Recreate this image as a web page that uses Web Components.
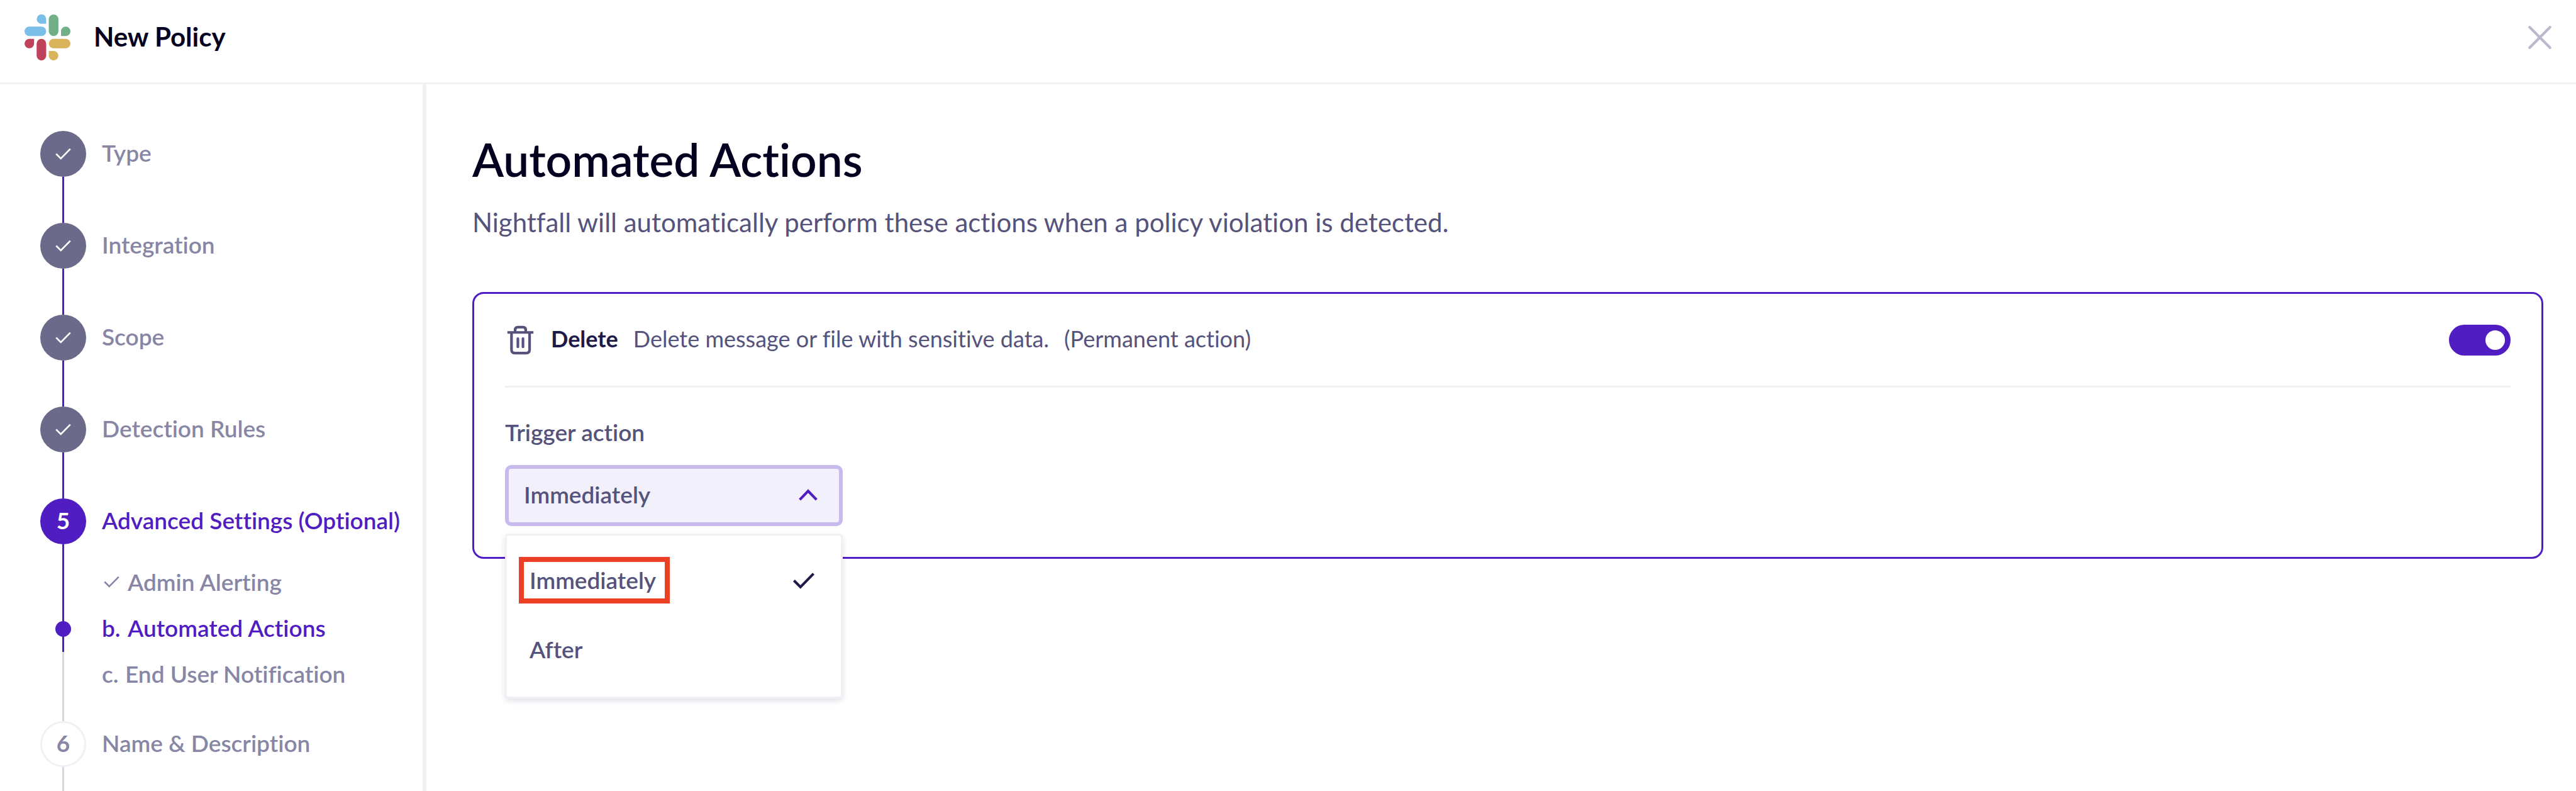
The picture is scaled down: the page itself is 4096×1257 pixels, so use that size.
<!DOCTYPE html>
<html lang="en">
<head>
<meta charset="utf-8">
<meta name="viewport" content="width=device-width, initial-scale=1">
<title>New Policy</title>
<style>
  :root {
    --ink: #03001f;
    --ink-strong: #1e1b4b;
    --ink-soft: #55537b;
    --ink-muted: #8886a5;
    --slate: #6b6a8a;
    --accent: #4f1dc2;
    --line: #f0f0f5;
    --rail: #d6d5e0;
  }
  body {
    margin: 0;
    background: #fff;
    color: var(--ink);
    font: 600 37px/44px Lato, "Liberation Sans", sans-serif;
    font-variant-ligatures: none;
  }
</style>
</head>
<body>
<policy-page>
  <page-header slot="header">New Policy</page-header>

  <step-nav slot="nav">
    <step-item state="done">Type</step-item>
    <step-item state="done">Integration</step-item>
    <step-item state="done">Scope</step-item>
    <step-item state="done">Detection Rules</step-item>
    <step-item state="current" number="5" open>Advanced Settings (Optional)</step-item>
    <sub-step state="done">Admin Alerting</sub-step>
    <sub-step state="current" marker="b.">Automated Actions</sub-step>
    <sub-step state="todo" marker="c." last>End User Notification</sub-step>
    <step-item state="todo" number="6">Name &amp; Description</step-item>
  </step-nav>

  <section-intro>
    <span slot="title">Automated Actions</span>
    Nightfall will automatically perform these actions when a policy violation is detected.
  </section-intro>

  <action-card name="Delete">
    <span slot="description">Delete message or file with sensitive data.</span>
    <span slot="note">(Permanent action)</span>
    <drop-down label="Trigger action" options="Immediately,After" value="Immediately"></drop-down>
  </action-card>
</policy-page>

<script>
const CHECK = '<path d="M3 14l10 10L33 3.5" fill="none" stroke="currentColor" stroke-width="var(--check-weight, 3.5)"/>';

class Base extends HTMLElement {
  connectedCallback() {
    if (this.shadowRoot) return;
    this.attachShadow({ mode: 'open' }).innerHTML = this.render();
  }
}

/* Page frame: header on top, step navigation beside the content. */
customElements.define('policy-page', class extends Base {
  render() {
    return `<style>
      :host { display: flex; flex-direction: column; min-height: 100vh; }
      .body { flex: 1; display: grid; grid-template-columns: auto 1fr; }
      main { padding: 75px 52px 73px 73px; min-width: 0; }
    </style>
    <slot name="header"></slot>
    <div class="body"><slot name="nav"></slot><main><slot></slot></main></div>`;
  }
});

customElements.define('page-header', class extends Base {
  render() {
    return `<style>
      :host { display: block; border-bottom: 3px solid var(--line); }
      header { display: flex; align-items: center; padding: 23px 39px 35px; }
      .logo { width: 73px; height: 73px; margin-right: 37px; }
      h1 { margin: 0; padding-bottom: 4px; flex: 1; font-size: 42px; line-height: 50px; font-weight: 700; }
      button { display: flex; padding: 0; border: 0; background: none; color: #bbb9cc; }
      button svg { width: 37px; height: 37px; }
    </style>
    <header>
      <svg class="logo" viewBox="0 0 96 96" aria-hidden="true">
        <g fill="#7bbfe8"><path d="M45.3 19.5H35.3A9.9 9.9 0 1 1 45.3 9.8Z"/><rect y="25.3" width="45.3" height="19.7" rx="9.8"/></g>
        <g fill="#71b087"><rect x="50.7" width="20.2" height="45" rx="10"/><path d="M76.3 45V35A9.85 9.85 0 1 1 86.2 45Z"/></g>
        <g fill="#bf425c"><path d="M20 51V61A10 9.9 0 1 1 10 51Z"/><rect x="25.3" y="51" width="20" height="45" rx="10"/></g>
        <g fill="#dab45c"><rect x="50.7" y="51" width="45.3" height="19.7" rx="9.8"/><path d="M50.7 76.3H60.8A10 9.85 0 1 1 50.7 86.2Z"/></g>
      </svg>
      <h1><slot></slot></h1>
      <button type="button" aria-label="Close">
        <svg viewBox="0 0 48 48" aria-hidden="true"><path d="M3 3l42 42M45 3L3 45" stroke="currentColor" stroke-width="5.5" stroke-linecap="round"/></svg>
      </button>
    </header>`;
  }
});

customElements.define('step-nav', class extends Base {
  render() {
    return `<style>
      :host { display: block; border-right: 6px solid var(--line); }
      nav { box-sizing: border-box; display: flex; flex-direction: column; height: 100%; padding: 74px 37px 0 64px; width: 672px; }
      ::slotted(:last-child) { flex: 1; }
    </style>
    <nav aria-label="Policy steps"><slot></slot></nav>`;
  }
});

customElements.define('step-item', class extends Base {
  render() {
    const number = this.getAttribute('number');
    const mark = number ? `<span class="num">${number}</span>` : `<svg viewBox="0 0 36 28" aria-hidden="true">${CHECK}</svg>`;
    return `<style>
      :host { display: grid; grid-template-columns: 73px 1fr; column-gap: 25px; color: var(--ink-muted); }
      .rail { display: flex; flex-direction: column; align-items: center; }
      .disc { box-sizing: border-box; flex: none; width: 73px; height: 73px; border-radius: 50%; display: flex; align-items: center; justify-content: center; background: var(--slate); color: #fff; }
      .disc svg { width: 27px; height: 21px; }
      .num { font-weight: 700; padding-bottom: 4px; }
      .line { flex: 1; width: 3px; min-height: 73px; background: var(--accent); }
      .label { height: 69px; line-height: 69px; white-space: nowrap; }
      :host([state=current]) { color: var(--accent); }
      :host([state=current]) .disc { background: var(--accent); }
      :host([state=todo]) .disc { background: #fff; border: 3px solid var(--line); color: var(--ink-muted); }
      :host([state=todo]) .line { background: var(--rail); min-height: 0; }
      :host([open]) .line { min-height: 25px; }
    </style>
    <div class="rail"><div class="disc">${mark}</div><div class="line"></div></div>
    <div class="label"><slot></slot></div>`;
  }
});

customElements.define('sub-step', class extends Base {
  render() {
    const marker = this.getAttribute('marker');
    const mark = marker || `<svg viewBox="0 0 36 28" aria-hidden="true">${CHECK}</svg>`;
    return `<style>
      :host { display: grid; grid-template-columns: 73px 1fr; column-gap: 25px; color: var(--ink-muted); }
      :host([last]) .rail { height: 110px; }
      .rail { display: flex; align-items: center; justify-content: center; height: 73px;
        background: linear-gradient(var(--accent), var(--accent)) center / 3px 100% no-repeat; }
      .label { display: flex; align-items: center; height: 69px; white-space: nowrap; }
      .mark { min-width: 41px; flex: none; }
      .mark svg { display: block; width: 27px; height: 21px; margin-left: 2px; }
      :host([state=current]) { color: var(--accent); }
      :host([state=current]) .rail::before { content: ""; width: 25px; height: 25px; border-radius: 50%; background: var(--accent); }
      :host([state=todo]) .rail { background-image: linear-gradient(var(--rail), var(--rail)); }
      :host([state=todo]) .mark { min-width: 37px; }
    </style>
    <div class="rail"></div>
    <div class="label"><span class="mark">${mark}</span><slot></slot></div>`;
  }
});

customElements.define('section-intro', class extends Base {
  render() {
    return `<style>
      :host { display: block; margin-bottom: 86px; }
      h2 { margin: 0 0 31px; font-size: 73px; line-height: 88px; font-weight: 600; }
      p { margin: 0; font-size: 42px; line-height: 50px; font-weight: 400; color: var(--ink-soft); }
    </style>
    <h2><slot name="title"></slot></h2>
    <p><slot></slot></p>`;
  }
});

customElements.define('action-card', class extends Base {
  render() {
    const name = this.getAttribute('name');
    return `<style>
      :host { display: block; border: 3px solid var(--accent); border-radius: 18px; padding: 0 49px 49px; }
      .row { display: flex; align-items: center; gap: 24px; height: 146px; border-bottom: 3px solid var(--line); margin-bottom: 49px; font-size: 36px; color: var(--ink-soft); }
      .row > svg { width: 49px; height: 49px; flex: none; }
      label, .text { padding-bottom: 4px; }
      label { color: var(--ink-strong); font-weight: 700; }
      .text { font-weight: 400; }
      input { appearance: none; display: flex; align-items: center; justify-content: flex-end; box-sizing: border-box;
        width: 98px; height: 49px; margin: 0 0 0 auto; padding: 0 9px; border-radius: 25px; background: var(--slate); }
      input:checked { background: var(--accent); }
      input::before { content: ""; width: 31px; height: 31px; border-radius: 50%; background: #fff; }
    </style>
    <div class="row">
      <svg viewBox="0 0 64 64" fill="none" stroke="currentColor" stroke-width="5.5" aria-hidden="true">
        <path d="M5 16H59M21 16V11Q21 5 27 5H37Q43 5 43 11V16M13.5 16V52Q13.5 59 20.5 59H44Q51 59 51 52V16"/>
        <path d="M26.7 29V46M37.3 29V46" stroke-linecap="round"/>
      </svg>
      <label for="enabled">${name}</label>
      <span class="text"><slot name="description"></slot></span>
      <span class="text"><slot name="note"></slot></span>
      <input id="enabled" type="checkbox" role="switch" checked>
    </div>
    <slot></slot>`;
  }
});

/* Select box with its list of choices open underneath. */
customElements.define('drop-down', class extends Base {
  render() {
    const value = this.getAttribute('value');
    const options = this.getAttribute('options').split(',');
    return `<style>
      :host { display: flex; flex-direction: column; align-items: flex-start; gap: 30px; color: var(--ink-soft); }
      .field { position: relative; width: 537px; }
      select { appearance: none; display: block; box-sizing: border-box; width: 100%; height: 97px; margin: 0; padding: 0 80px 4px 24px;
        border: 6px solid #c8baea; border-radius: 10px; background: #f2f0fb; color: inherit; font: inherit; outline: none; }
      .chevron { position: absolute; right: 39px; top: 38px; width: 32px; height: 20px; color: var(--accent); pointer-events: none; }
      .menu { position: absolute; z-index: 1; top: calc(100% + 12px); left: 0; right: 0; margin: 0; padding: 16px 0 20px; list-style: none;
        background: #fff; border: 3px solid var(--line); border-radius: 6px; box-shadow: 0 4px 10px rgba(30, 27, 75, .13); }
      button { display: flex; align-items: center; justify-content: space-between; width: 100%; height: 110px; padding: 0 40px 0 36px;
        border: 0; background: none; color: inherit; font: inherit; text-align: left; }
      .picked { padding: 7px 14px 7px 9px; margin-left: -17px; border: 8px solid #eb4024; }
      button svg { width: 38px; height: 29px; color: var(--ink-strong); --check-weight: 4; }
    </style>
    <label for="choice">${this.getAttribute('label')}</label>
    <div class="field">
      <select id="choice">${options.map(o => `<option${o === value ? ' selected' : ''}>${o}</option>`).join('')}</select>
      <svg class="chevron" viewBox="0 0 38 24" aria-hidden="true"><path d="M3 20.500L19 4l16 16.500" fill="none" stroke="currentColor" stroke-width="5"/></svg>
      <ul class="menu">${options.map(o => o === value
        ? `<li><button type="button"><span class="picked">${o}</span><svg viewBox="0 0 36 28" aria-hidden="true">${CHECK}</svg></button></li>`
        : `<li><button type="button"><span>${o}</span></button></li>`).join('')}</ul>
    </div>`;
  }
});
</script>
</body>
</html>
